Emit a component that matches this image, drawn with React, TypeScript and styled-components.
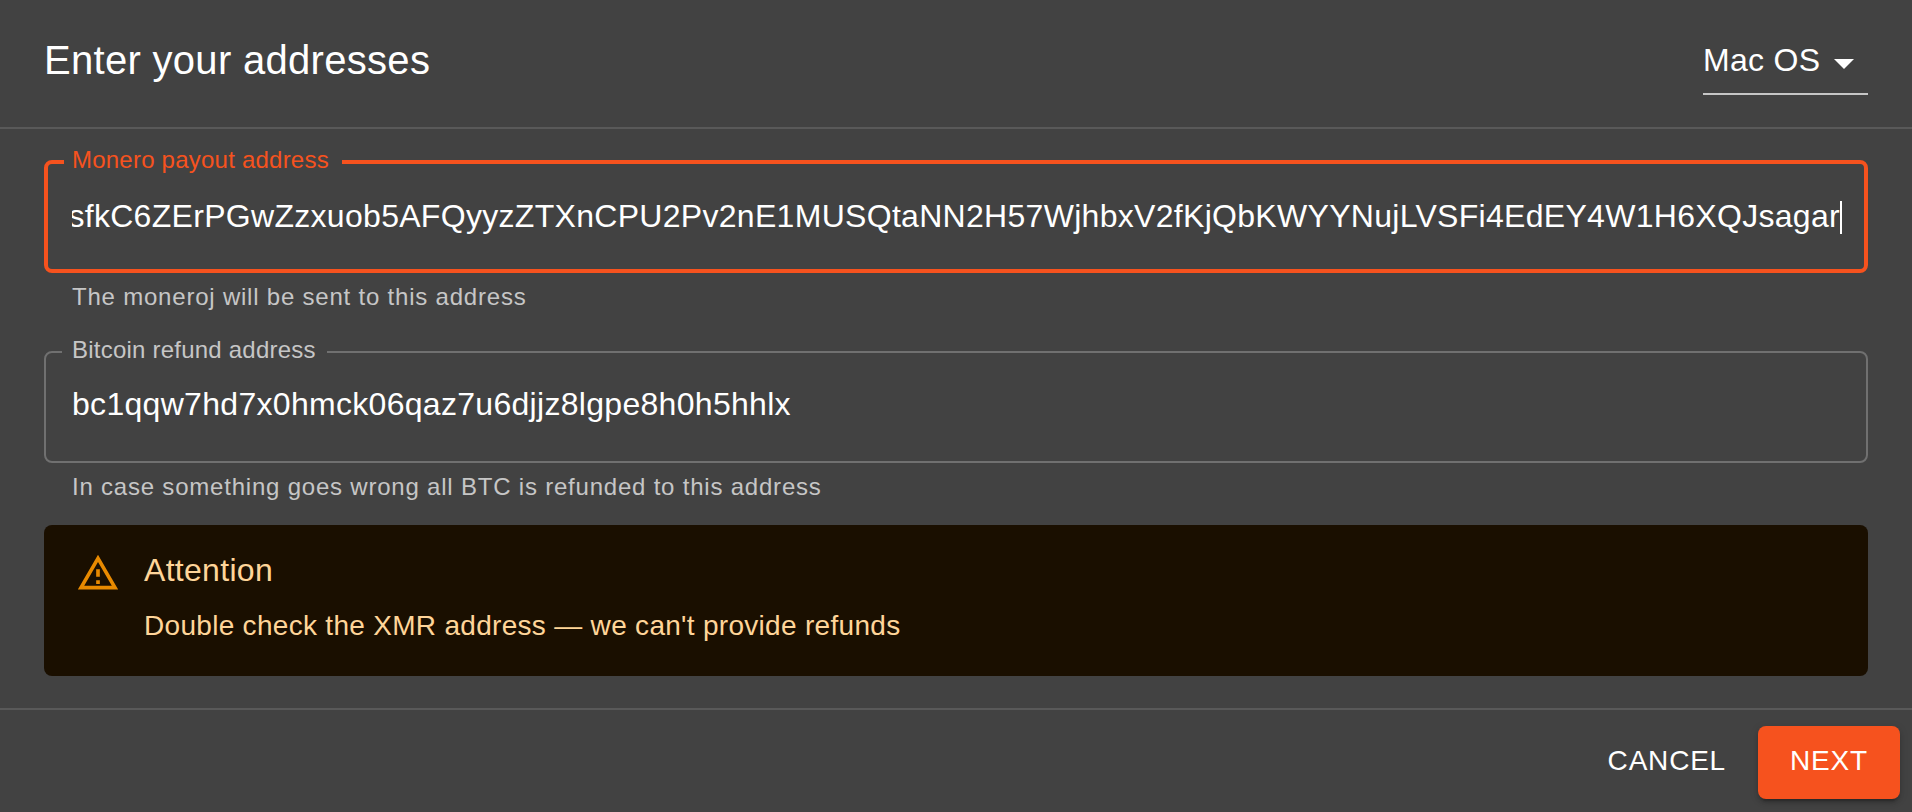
import React from 'react';
import styled, { createGlobalStyle } from 'styled-components';

const GlobalStyle = createGlobalStyle`
  *, *::before, *::after { box-sizing: border-box; }
  body {
    margin: 0;
    background: #424242;
    color: #fff;
    font-family: "Liberation Sans", Helvetica, Arial, sans-serif;
  }
`;

const Dialog = styled.main`
  display: flex;
  flex-direction: column;
  height: 812px;
  overflow: hidden;
  background: #424242;
`;

const Header = styled.header`
  display: flex;
  justify-content: space-between;
  align-items: flex-start;
  height: 127px;
  padding: 0 44px;
`;

const Title = styled.h1`
  margin: 28px 0 0;
  font-size: 40px;
  font-weight: 400;
  line-height: 64px;
  letter-spacing: 0.3px;
  white-space: nowrap;
`;

const Select = styled.div`
  display: flex;
  align-items: flex-start;
  width: 165px;
  height: 54px;
  margin-top: 41px;
  border-bottom: 2px solid #c6c6c6;
  font-size: 32px;
  line-height: 38px;
  letter-spacing: 0.3px;
  white-space: nowrap;
`;

const Arrow = styled.svg`
  flex: none;
  width: 48px;
  height: 48px;
  margin: -2px 0 0 auto;
  fill: #fff;
`;

const Body = styled.section`
  display: flex;
  flex-direction: column;
  height: 583px;
  padding: 31px 44px 32px;
  border-top: 2px solid #595959;
  border-bottom: 2px solid #595959;
`;

const Field = styled.div<{ $focused?: boolean }>`
  position: relative;
  flex: none;
  height: ${p => (p.$focused ? 113 : 112)}px;
  padding: ${p => (p.$focused ? '33px 22px 0 24px' : '32px 24px 0 26px')};
  border: ${p => (p.$focused ? '4px solid #f6521e' : '2px solid #707070')};
  border-radius: 8px;
`;

const Label = styled.label<{ $focused?: boolean }>`
  position: absolute;
  top: ${p => (p.$focused ? -16 : -15)}px;
  left: 16px;
  width: ${p => (p.$focused ? 278 : 265)}px;
  padding-left: ${p => (p.$focused ? 8 : 10)}px;
  background: #424242;
  color: ${p => (p.$focused ? '#f6521e' : '#c6c6c6')};
  font-size: 24px;
  line-height: 24px;
  letter-spacing: 0.225px;
  white-space: nowrap;
`;

const Value = styled.div<{ $alignEnd?: boolean }>`
  display: flex;
  justify-content: ${p => (p.$alignEnd ? 'flex-end' : 'flex-start')};
  overflow: hidden;
  font-size: 32px;
  line-height: 38px;
  letter-spacing: 0.3px;
  white-space: nowrap;
`;

const Caret = styled.span`
  flex: none;
  width: 2px;
  height: 33px;
  margin-top: 4px;
  background: #fff;
`;

const Helper = styled.p<{ $gap: number }>`
  margin: 4px 28px ${p => p.$gap}px;
  color: #c6c6c6;
  font-size: 24px;
  line-height: 40px;
  letter-spacing: 0.79px;
`;

const Alert = styled.div`
  display: flex;
  height: 151px;
  padding: 21px 32px 0;
  border-radius: 8px;
  background: #1a0f00;
  color: #ffd599;
`;

const WarningIcon = styled.svg`
  flex: none;
  width: 44px;
  height: 44px;
  margin: 5px 24px 0 0;
  fill: #ff9800;
  opacity: 0.9;
`;

const AlertTitle = styled.div`
  font-size: 32px;
  line-height: 48px;
  letter-spacing: 0.3px;
`;

const AlertText = styled.div`
  margin-top: 12px;
  font-size: 28px;
  line-height: 40px;
  letter-spacing: 0.3px;
`;

const Footer = styled.footer`
  display: flex;
  justify-content: flex-end;
  align-items: flex-start;
  gap: 16px;
  padding: 16px 12px 0;
`;

const Button = styled.button<{ $primary?: boolean }>`
  height: 73px;
  padding: 10px ${p => (p.$primary ? 32 : 16)}px 14px;
  ${p => p.$primary && 'width: 142px;'}
  border: 0;
  border-radius: 8px;
  background: ${p => (p.$primary ? '#f6521e' : 'transparent')};
  box-shadow: ${p =>
    p.$primary
      ? '0 6px 2px -4px rgba(0,0,0,.2), 0 4px 4px rgba(0,0,0,.14), 0 2px 10px rgba(0,0,0,.12)'
      : 'none'};
  color: #fff;
  font: 400 28px/49px "Liberation Sans", Helvetica, Arial, sans-serif;
  letter-spacing: 0.8px;
  white-space: nowrap;
`;

export default function App() {
  return (
    <>
      <GlobalStyle />
      <Dialog>
        <Header>
          <Title>Enter your addresses</Title>
          <Select>
            <span>Mac OS</span>
            <Arrow viewBox="0 0 24 24"><path d="M7 10l5 5 5-5z" /></Arrow>
          </Select>
        </Header>
        <Body>
          <Field $focused>
            <Label $focused>Monero payout address</Label>
            <Value $alignEnd>
              <span>sfkC6ZErPGwZzxuob5AFQyyzZTXnCPU2Pv2nE1MUSQtaNN2H57WjhbxV2fKjQbKWYYNujLVSFi4EdEY4W1H6XQJsagar</span>
              <Caret />
            </Value>
          </Field>
          <Helper $gap={34}>The moneroj will be sent to this address</Helper>
          <Field>
            <Label>Bitcoin refund address</Label>
            <Value>bc1qqw7hd7x0hmck06qaz7u6djjz8lgpe8h0h5hhlx</Value>
          </Field>
          <Helper $gap={18}>In case something goes wrong all BTC is refunded to this address</Helper>
          <Alert>
            <WarningIcon viewBox="0 0 24 24">
              <path d="M12 5.99L19.53 19H4.47L12 5.99M12 2L1 21h22L12 2zm1 14h-2v2h2v-2zm0-6h-2v4h2v-4z" />
            </WarningIcon>
            <div>
              <AlertTitle>Attention</AlertTitle>
              <AlertText>Double check the XMR address — we can't provide refunds</AlertText>
            </div>
          </Alert>
        </Body>
        <Footer>
          <Button>CANCEL</Button>
          <Button $primary>NEXT</Button>
        </Footer>
      </Dialog>
    </>
  );
}
